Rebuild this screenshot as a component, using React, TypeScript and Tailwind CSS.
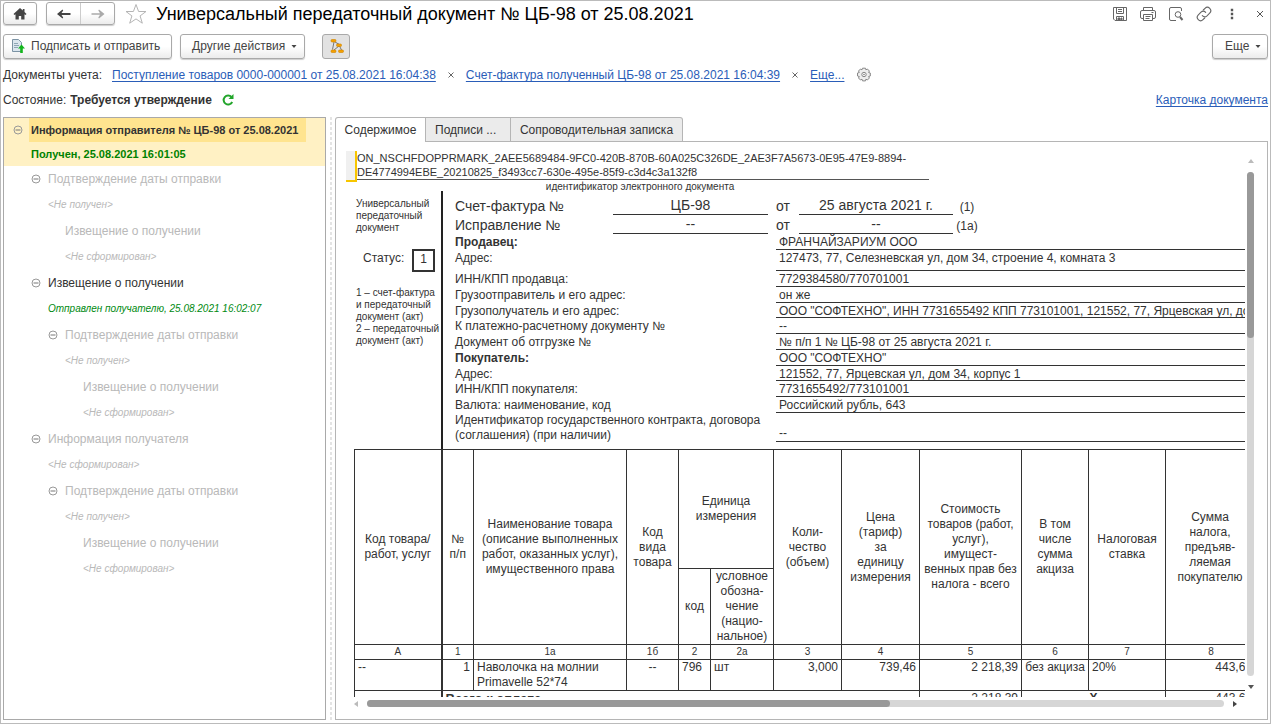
import type { ReactNode } from "react";

interface TreeNode {
  title: string;
  status: string;
  level: 1 | 2 | 3;
  expandable?: boolean;
  sent?: boolean;
}

const TREE: TreeNode[] = [
  { title: "Подтверждение даты отправки", status: "<Не получен>", level: 1, expandable: true },
  { title: "Извещение о получении", status: "<Не сформирован>", level: 2 },
  { title: "Извещение о получении", status: "Отправлен получателю, 25.08.2021 16:02:07", level: 1, expandable: true, sent: true },
  { title: "Подтверждение даты отправки", status: "<Не получен>", level: 2, expandable: true },
  { title: "Извещение о получении", status: "<Не сформирован>", level: 3 },
  { title: "Информация получателя", status: "<Не сформирован>", level: 1, expandable: true },
  { title: "Подтверждение даты отправки", status: "<Не получен>", level: 2, expandable: true },
  { title: "Извещение о получении", status: "<Не сформирован>", level: 3 },
];

const INDENT = {
  1: "pl-[27px]",
  2: "pl-[44px]",
  3: "pl-[62px]",
};

interface Requisite {
  label: string;
  value: string;
  bold?: boolean;
  /** Row height class, the sheet rows are not all equal. */
  height: string;
}

const REQUISITES: Requisite[] = [
  { label: "Продавец:", value: "ФРАНЧАЙЗАРИУМ ООО", bold: true, height: "h-4" },
  { label: "Адрес:", value: "127473, 77, Селезневская ул, дом 34, строение 4, комната 3", height: "h-[21px]" },
  { label: "ИНН/КПП продавца:", value: "7729384580/770701001", height: "h-4" },
  { label: "Грузоотправитель и его адрес:", value: "он же", height: "h-4" },
  { label: "Грузополучатель и его адрес:", value: "ООО \"СОФТЕХНО\", ИНН 7731655492 КПП 773101001, 121552, 77, Ярцевская ул, дом", height: "h-[15px]" },
  { label: "К платежно-расчетному документу №", value: "--", height: "h-4" },
  { label: "Документ об отгрузке №", value: "№ п/п 1 № ЦБ-98 от 25 августа 2021 г.", height: "h-4" },
  { label: "Покупатель:", value: "ООО \"СОФТЕХНО\"", bold: true, height: "h-4" },
  { label: "Адрес:", value: "121552, 77, Ярцевская ул, дом 34, корпус 1", height: "h-[15px]" },
  { label: "ИНН/КПП покупателя:", value: "7731655492/773101001", height: "h-4" },
  { label: "Валюта: наименование, код", value: "Российский рубль, 643", height: "h-4" },
];

const Caret = () => (
  <svg viewBox="0 0 6 4" className="mt-0.5 h-1 w-1.5 shrink-0" fill="#444" aria-hidden="true">
    <path d="M.5 0h5L3 3z" />
  </svg>
);

const Minus = ({ label }: { label: string }) => (
  <button type="button" aria-label={`Свернуть: ${label}`} className="flex w-[10px] shrink-0 justify-center">
    <svg viewBox="0 0 10 10" className="h-[10px] w-[10px]" fill="none" stroke="#999" aria-hidden="true">
      <circle cx="5" cy="5" r="4" />
      <path d="M2.500 5h5" stroke="#777" />
    </svg>
  </button>
);

const BUTTON =
  "flex items-center rounded-[3px] border border-[#a9a9a9] bg-linear-to-b from-white from-50% to-[#ececec] whitespace-nowrap text-[#444] shadow-[0_1px_1px_rgba(0,0,0,0.2)]";

const IconButton = ({ label, children }: { label: string; children: ReactNode }) => (
  <button type="button" aria-label={label} className="flex h-4 w-4 items-center justify-center">
    {children}
  </button>
);

const TitleBar = () => (
  <header className="flex h-[25px] items-center">
    <button type="button" aria-label="Начальная страница" className={`${BUTTON} h-[23px] w-[34px] justify-center`}>
      <svg viewBox="0 0 14 12" className="h-3 w-3.5" fill="#444" aria-hidden="true">
        <path d="M7 0 .5 6l1 1L2.500 6.200V11.500h3.300V8h2.400v3.500h3.300V6.200L12.500 7l1-1L11.500 4V1H9.800v1.500z" />
      </svg>
    </button>
    <div className={`${BUTTON} ml-[9px] h-[23px] w-[69px]`}>
      <button type="button" aria-label="Назад" className="flex h-full flex-1 items-center justify-center border-r border-[#ccc]">
        <svg viewBox="0 0 14 10" className="h-2.5 w-3.5" fill="#444" aria-hidden="true">
          <path d="M0 5 5.500.500l.7 1L4.500 4H13.500v2H4.500l1.700 2.500-.7 1z" />
        </svg>
      </button>
      <button type="button" aria-label="Вперед" className="flex h-full flex-1 items-center justify-center">
        <svg viewBox="0 0 14 10" className="h-2.5 w-3.5" fill="#aaa" aria-hidden="true">
          <path d="M13.500 5 8 .500l-.7 1L9 4.200H.5v1.600H9L7.300 8.500l.7 1z" />
        </svg>
      </button>
    </div>
    <button type="button" aria-label="В избранное" className="ml-[9px]">
      <svg viewBox="0 0 24 22" className="h-[22px] w-6" fill="white" stroke="#b5b5b5" aria-hidden="true">
        <path d="m12 1.500 2.600 7H22l-5.900 4.400 2.200 7.300L12 15.900l-6.300 4.300 2.200-7.300L2 8.500h7.400z" />
      </svg>
    </button>
    <h1 className="ml-2 text-[18px] leading-6 whitespace-nowrap text-black">
      Универсальный передаточный документ № ЦБ-98 от 25.08.2021
    </h1>
    <div className="ml-auto flex items-center gap-3">
      <IconButton label="Сохранить">
        <svg viewBox="0 0 16 16" className="h-4 w-4" fill="none" stroke="#666" aria-hidden="true">
          <path d="M1.500 1.500h13v13H3L1.500 13zM4.500 1.500v6h7v-6M6 3.500h4M6 5.500h4M4.500 14.500v-4h7v4" />
          <path d="M6 12h2v2H6zM9 12h1v2H9z" fill="#666" />
        </svg>
      </IconButton>
      <IconButton label="Печать">
        <svg viewBox="0 0 16 16" className="h-4 w-4" fill="none" stroke="#666" aria-hidden="true">
          <path d="M3.500 4.500v-3h9v3M3.500 12.500H2A1.500 1.500 0 0 1 .5 11V6A1.500 1.500 0 0 1 2 4.500h12A1.500 1.500 0 0 1 15.500 6v5a1.500 1.500 0 0 1-1.500 1.500h-1.500M3.500 8.500h9v6h-9zM5.500 10.500h5M5.500 12.500h4M11.500 6.500h2" />
        </svg>
      </IconButton>
      <IconButton label="Просмотр">
        <svg viewBox="0 0 16 16" className="h-4 w-4" fill="none" stroke="#666" aria-hidden="true">
          <path d="M8 14.500H3A1.500 1.500 0 0 1 1.500 13V3A1.500 1.500 0 0 1 3 1.500h9A1.500 1.500 0 0 1 13.500 3v2" />
          <circle cx="10" cy="8.500" r="2.800" />
          <path d="m12 11 2.500 3" strokeWidth="2" />
        </svg>
      </IconButton>
      <IconButton label="Получить ссылку">
        <svg viewBox="0 0 24 24" className="h-4 w-4" fill="none" stroke="#666" strokeWidth="1.700" strokeLinecap="round" aria-hidden="true">
          <path d="M9.500 14.500a5 5 0 0 0 7 .2l4-4a5 5 0 0 0-7-7.200l-2.500 2.500" />
          <path d="M14.500 9.500a5 5 0 0 0-7-.2l-4 4a5 5 0 0 0 7 7.200l2.500-2.500" />
        </svg>
      </IconButton>
      <IconButton label="Дополнительно">
        <svg viewBox="0 0 4 12" className="h-3 w-1" fill="#555" aria-hidden="true">
          <path d="M.8.800h2.400v2.400H.8zM.8 4.800h2.400v2.400H.8zM.8 8.800h2.400v2.400H.8z" />
        </svg>
      </IconButton>
      <IconButton label="Закрыть">
        <svg viewBox="0 0 8 8" className="h-2 w-2" stroke="#555" aria-hidden="true">
          <path d="m1 1 6 6M7 1 1 7" />
        </svg>
      </IconButton>
    </div>
  </header>
);

const CommandBar = () => (
  <div className="mt-[7px] flex h-[26px] items-center text-[12px]">
    <button type="button" className={`${BUTTON} h-[25px] w-[169px] pl-[7px]`}>
      <svg viewBox="0 0 14 14" className="mr-1.5 h-3.5 w-3.5 shrink-0" fill="none" aria-hidden="true">
        <path d="M1.500.500h6l3 3v9h-9z" fill="#dbe6ee" stroke="#7c93a4" />
        <path d="M3 4.500h4M3 6.500h5M3 8.500h4" stroke="#8fa6b6" />
        <path d="m10.500 5.500 3.500 4h-2.200V14H9.200V9.500H7z" fill="#12b51c" />
      </svg>
      Подписать и отправить
    </button>
    <button type="button" className={`${BUTTON} ml-2 h-[25px] w-[125px] gap-1.5 pl-[11px]`}>
      Другие действия
      <Caret />
    </button>
    <button
      type="button"
      aria-label="Дерево документов"
      className="ml-[17px] flex h-[25px] w-7 items-center justify-center rounded-[3px] border border-[#a9a9a9] bg-[#e2e2e2]"
    >
      <svg viewBox="0 0 16 16" className="h-4 w-4" aria-hidden="true">
        <path d="M6 4 4.500 11.500M7 4l4.500 2.500M11 8l-5 4M11.500 8l2 4" stroke="#777" fill="none" />
        <rect x="3" y="1.500" width="5" height="2.500" rx="1" fill="#f5a100" stroke="#cf8300" strokeWidth=".6" />
        <rect x="8.500" y="6" width="5" height="2.500" rx="1" fill="#f5a100" stroke="#cf8300" strokeWidth=".6" />
        <rect x="3" y="12" width="5" height="2.500" rx="1" fill="#f5a100" stroke="#cf8300" strokeWidth=".6" />
        <rect x="10.500" y="12" width="5" height="2.500" rx="1" fill="#f5a100" stroke="#cf8300" strokeWidth=".6" />
      </svg>
    </button>
    <button type="button" className={`${BUTTON} ml-auto h-[25px] w-[56px] gap-1.5 pl-3`}>
      Еще
      <Caret />
    </button>
  </div>
);

const LINK = "text-[#2a5db8] underline underline-offset-2";

const Remove = ({ label }: { label: string }) => (
  <button type="button" aria-label={label} className="mx-3 flex h-4 w-[6px] items-center">
    <svg viewBox="0 0 6 6" className="h-1.5 w-1.5" stroke="#666" aria-hidden="true">
      <path d="m.5.500 5 5M5.500.500l-5 5" />
    </svg>
  </button>
);

const LinkedDocuments = () => (
  <div className="mt-[7px] flex h-[18px] items-center whitespace-nowrap">
    <span className="w-[109px]">Документы учета:</span>
    <a href="#receipt" className={LINK}>Поступление товаров 0000-000001 от 25.08.2021 16:04:38</a>
    <Remove label="Убрать поступление" />
    <a href="#invoice" className={LINK}>Счет-фактура полученный ЦБ-98 от 25.08.2021 16:04:39</a>
    <Remove label="Убрать счет-фактуру" />
    <a href="#more" className={LINK}>Еще...</a>
    <button type="button" aria-label="Настройка" className="ml-3">
      <svg viewBox="0 0 16 16" className="h-4 w-4" fill="#eee" stroke="#888" aria-hidden="true">
        <path d="M6.500 1.200h3l.4 1.600 1.500-.8 2 2-.8 1.500 1.700.5v3l-1.700.5.8 1.500-2 2-1.500-.8-.4 1.700h-3L6 12.200l-1.500.8-2-2 .8-1.500L1.500 9V6l1.800-.5L2.500 4l2-2 1.500.8z" />
        <circle cx="8" cy="7.500" r="2.200" fill="white" />
        <circle cx="8" cy="7.500" r=".5" />
      </svg>
    </button>
  </div>
);

const StatusLine = () => (
  <div className="mt-[7px] flex h-[18px] items-center whitespace-nowrap">
    <span>Состояние:</span>
    <b className="ml-1">Требуется утверждение</b>
    <button type="button" aria-label="Обновить" className="ml-2.5">
      <svg viewBox="0 0 12 12" className="h-3 w-3" fill="none" stroke="#22a52b" strokeWidth="2" aria-hidden="true">
        <path d="M9.500 3A4.500 4.500 0 1 0 10.200 8" />
        <path d="M11.500 0v5h-5z" fill="#22a52b" stroke="none" />
      </svg>
    </button>
    <a href="#card" className={`${LINK} ml-auto`}>Карточка документа</a>
  </div>
);

const DocumentTree = () => (
  <aside className="w-[323px] shrink-0 overflow-hidden border border-[#a9a9a9] bg-white">
    <div className="bg-[#fff1c4] text-[11px] font-bold">
      <div className="flex h-6 items-center pl-[9px]">
        <Minus label="Информация отправителя" />
        <span className="ml-[6px] flex h-6 items-center bg-[#ffe48f] pr-2 pl-0.5 whitespace-nowrap">
          Информация отправителя № ЦБ-98 от 25.08.2021
        </span>
      </div>
      <p className="h-6 pl-[27px] leading-6 text-[#008200]">Получен, 25.08.2021 16:01:05</p>
    </div>
    <ul>
      {TREE.map((node, i) => (
        <li key={i} className={INDENT[node.level]}>
          <div className={`flex h-[26px] items-center ${node.sent ? "text-[#333]" : "text-[#b9b9b9]"}`}>
            {node.expandable ? <Minus label={node.title} /> : <span className="w-[10px]" />}
            <span className="ml-[7px] text-[12px]">{node.title}</span>
          </div>
          <p className={`h-[26px] pl-[17px] text-[10px] leading-[26px] italic ${node.sent ? "text-[#008a10]" : "text-[#b9b9b9]"}`}>
            {node.status}
          </p>
        </li>
      ))}
    </ul>
  </aside>
);

const SheetHeading = ({ label, value, date, mark, height }: { label: string; value: string; date: string; mark: string; height: string }) => (
  <div className={`flex items-end text-[14px] leading-[18px] ${height}`}>
    <span className="w-[158px]">{label}</span>
    <span className="w-[155px] border-b border-[#333] text-center">{value}</span>
    <span className="w-[31px] pl-2">от</span>
    <span className="w-[154px] border-b border-[#333] text-center">{date}</span>
    <span className="w-[28px] text-center text-[12px] leading-4">{mark}</span>
  </div>
);

const Requisites = () => (
  <div className="flex">
    <div className="w-[87px] shrink-0 pt-[7px] pl-0.5 text-[10px] leading-3">
      <p>Универсальный<br />передаточный<br />документ</p>
      <div className="mt-[15px] flex items-start pl-[7px] text-[12px] leading-[18px]">
        <span className="w-[49px]">Статус:</span>
        <span className="h-[23px] w-[23px] border-2 border-[#333] text-center leading-4">1</span>
      </div>
      <p className="mt-[15px] whitespace-nowrap">
        1 – счет-фактура<br />и передаточный<br />документ (акт)<br />2 – передаточный<br />документ (акт)
      </p>
    </div>
    <div className="min-w-0 flex-1 border-l-2 border-[#222] pb-[7px] pl-3">
      <SheetHeading label="Счет-фактура №" value="ЦБ-98" date="25 августа 2021 г." mark="(1)" height="h-6" />
      <SheetHeading label="Исправление №" value="--" date="--" mark="(1а)" height="h-[19px]" />
      <dl>
        {REQUISITES.map((r, i) => (
          <div key={i} className={`flex leading-4 ${r.height}`}>
            <dt className={r.bold ? "w-[321px] shrink-0 font-bold" : "w-[321px] shrink-0"}>{r.label}</dt>
            <dd className="flex-1 border-b border-[#333] pl-[3px] whitespace-nowrap">{r.value}</dd>
          </div>
        ))}
        <div className="flex h-[29px] leading-[15px]">
          <dt className="w-[321px] shrink-0">
            Идентификатор государственного контракта, договора<br />(соглашения) (при наличии)
          </dt>
          <dd className="flex flex-1 items-end border-b border-[#333] pl-[3px]">--</dd>
        </div>
      </dl>
    </div>
  </div>
);

const CELL = "border border-[#333]";
const HEAD = "border border-[#333] font-normal whitespace-pre";

const GoodsTable = () => (
  <table className="w-[902px] table-fixed border-collapse leading-[15px]">
    <colgroup>
      <col className="w-[87px]" />
      <col className="w-[32px]" />
      <col className="w-[153px]" />
      <col className="w-[52px]" />
      <col className="w-[32px]" />
      <col className="w-[63px]" />
      <col className="w-[68px]" />
      <col className="w-[78px]" />
      <col className="w-[102px]" />
      <col className="w-[67px]" />
      <col className="w-[77px]" />
      <col className="w-[91px]" />
    </colgroup>
    <thead>
      <tr className="h-[119px]">
        <th rowSpan={2} className={HEAD}>{"Код товара/\nработ, услуг"}</th>
        <th rowSpan={2} className={`${HEAD} border-l-2`}>{"№\nп/п"}</th>
        <th rowSpan={2} className={HEAD}>{"Наименование товара\n(описание выполненных\nработ, оказанных услуг),\nимущественного права"}</th>
        <th rowSpan={2} className={HEAD}>{"Код\nвида\nтовара"}</th>
        <th colSpan={2} className={HEAD}>{"Единица\nизмерения"}</th>
        <th rowSpan={2} className={HEAD}>{"Коли-\nчество\n(объем)"}</th>
        <th rowSpan={2} className={HEAD}>{"Цена\n(тариф)\nза\nединицу\nизмерения"}</th>
        <th rowSpan={2} className={HEAD}>{"Стоимость\nтоваров (работ,\nуслуг),\nимущест-\nвенных прав без\nналога - всего"}</th>
        <th rowSpan={2} className={HEAD}>{"В том\nчисле\nсумма\nакциза"}</th>
        <th rowSpan={2} className={HEAD}>{"Налоговая\nставка"}</th>
        <th rowSpan={2} className={`${HEAD} pr-0.5`}>{"Сумма\nналога,\nпредъяв-\nляемая\nпокупателю"}</th>
      </tr>
      <tr className="h-[75px]">
        <th className={HEAD}>код</th>
        <th className={HEAD}>{"условное\nобозна-\nчение\n(нацио-\nнальное)"}</th>
      </tr>
      <tr className="h-[15px] text-[10px] leading-[14px]">
        {["А", "1", "1а", "1б", "2", "2а", "3", "4", "5", "6", "7", "8"].map((n) => (
          <th key={n} className={n === "1" ? `${HEAD} border-l-2` : HEAD}>{n}</th>
        ))}
      </tr>
    </thead>
    <tbody>
      <tr className="h-[31px] align-top">
        <td className={`${CELL} pl-[3px]`}>--</td>
        <td className={`${CELL} border-l-2 pr-[3px] text-right`}>1</td>
        <td className={`${CELL} pl-[3px]`}>Наволочка на молнии<br />Primavelle 52*74</td>
        <td className={`${CELL} text-center`}>--</td>
        <td className={`${CELL} pl-[3px]`}>796</td>
        <td className={`${CELL} pl-[3px]`}>шт</td>
        <td className={`${CELL} pr-[3px] text-right`}>3,000</td>
        <td className={`${CELL} pr-[3px] text-right`}>739,46</td>
        <td className={`${CELL} pr-[3px] text-right`}>2 218,39</td>
        <td className={`${CELL} text-center whitespace-nowrap`}>без акциза</td>
        <td className={`${CELL} pl-[3px]`}>20%</td>
        <td className={`${CELL} pr-1 text-right`}>443,68</td>
      </tr>
      <tr className="h-5 align-top">
        <td className={CELL} />
        <td colSpan={7} className={`${CELL} border-l-2 pl-[3px] text-[13px] font-bold`}>Всего к оплате</td>
        <td className={`${CELL} pr-[3px] text-right`}>2 218,39</td>
        <td colSpan={2} className={`${CELL} text-center font-bold`}>X</td>
        <td className={`${CELL} pr-1 text-right`}>443,68</td>
      </tr>
    </tbody>
  </table>
);

const Sheet = () => (
  <div className="min-w-[910px] text-[12px] text-[#333]">
    <div className="flex">
      <div className="h-[31px] w-[11px] border-r-2 border-b-2 border-[#f7c600] bg-[#f0f0f0]" />
      <p className="h-[29px] w-[572px] border-b border-[#555] text-[11px] leading-[14px] whitespace-nowrap">
        ON_NSCHFDOPPRMARK_2AEE5689484-9FC0-420B-870B-60A025C326DE_2AE3F7A5673-0E95-47E9-8894-<br />
        DE4774994EBE_20210825_f3493cc7-630e-495e-85f9-c3d4c3a132f8
      </p>
    </div>
    <p className="h-[9px] w-[588px] text-center text-[10px] leading-[9px]">идентификатор электронного документа</p>
    <div className="pl-2">
      <Requisites />
      <GoodsTable />
    </div>
  </div>
);

const TAB = "flex h-[25px] items-center border border-[#b5b5b5] text-[12px]";

const Viewer = () => (
  <main className="flex min-w-0 flex-1 flex-col">
    <div role="tablist" className="flex h-[25px]">
      <button role="tab" aria-selected="true" type="button" className={`${TAB} w-[91px] justify-center rounded-tl-[3px] border-b-0 bg-white`}>
        Содержимое
      </button>
      <button role="tab" aria-selected="false" type="button" className={`${TAB} w-[85px] border-l-0 bg-[#ebebeb] pl-[9px]`}>
        Подписи ...
      </button>
      <button role="tab" aria-selected="false" type="button" className={`${TAB} w-[172px] justify-center rounded-tr-[3px] border-l-0 bg-[#ebebeb]`}>
        Сопроводительная записка
      </button>
      <div className="flex-1 border-b border-[#b5b5b5]" />
    </div>
    <div className="flex min-h-0 flex-1 flex-col border border-t-0 border-[#b5b5b5] pt-[9px] pr-[13px] pb-3 pl-2.5">
      <div className="flex min-h-0 flex-1">
        <div className="min-w-0 flex-1 overflow-hidden">
          <Sheet />
        </div>
        <div className="ml-0.5 flex w-[7px] flex-col items-center pt-2 pb-2">
          <svg viewBox="0 0 6 4" className="h-1 w-1.5" fill="#bbb" aria-hidden="true">
            <path d="M0 4h6L3 0z" />
          </svg>
          <div className="mt-[9px] w-[7px] flex-1 rounded-full bg-[#d6d6d6]">
            <div className="h-[33%] rounded-full bg-[#999]" />
          </div>
          <svg viewBox="0 0 6 4" className="mt-[9px] h-1 w-1.5" fill="#555" aria-hidden="true">
            <path d="M0 0h6L3 4z" />
          </svg>
        </div>
      </div>
      <div className="mt-[3px] mr-[17px] flex h-[7px] items-center pl-2">
        <svg viewBox="0 0 4 6" className="h-1.5 w-1" fill="#bbb" aria-hidden="true">
          <path d="M4 0v6L0 3z" />
        </svg>
        <div className="ml-[9px] h-[7px] flex-1 rounded-full bg-[#d6d6d6]">
          <div className="h-[7px] w-[61%] rounded-full bg-[#999]" />
        </div>
        <svg viewBox="0 0 4 6" className="ml-[9px] h-1.5 w-1" fill="#444" aria-hidden="true">
          <path d="M0 0v6l4-3z" />
        </svg>
      </div>
    </div>
  </main>
);

export default function App() {
  return (
    <div className="flex h-screen flex-col overflow-hidden border border-[#bbb] bg-white px-0.5 pb-[3px] font-['Liberation_Sans',Arial,sans-serif] text-[12px] text-[#333]">
      <TitleBar />
      <CommandBar />
      <LinkedDocuments />
      <StatusLine />
      <div className="mt-2 flex min-h-0 flex-1">
        <DocumentTree />
        <div className="mr-[3px] ml-1 w-0.5 bg-[repeating-linear-gradient(#e4e4e4_0_3px,transparent_3px_5px)]" />
        <Viewer />
      </div>
    </div>
  );
}
